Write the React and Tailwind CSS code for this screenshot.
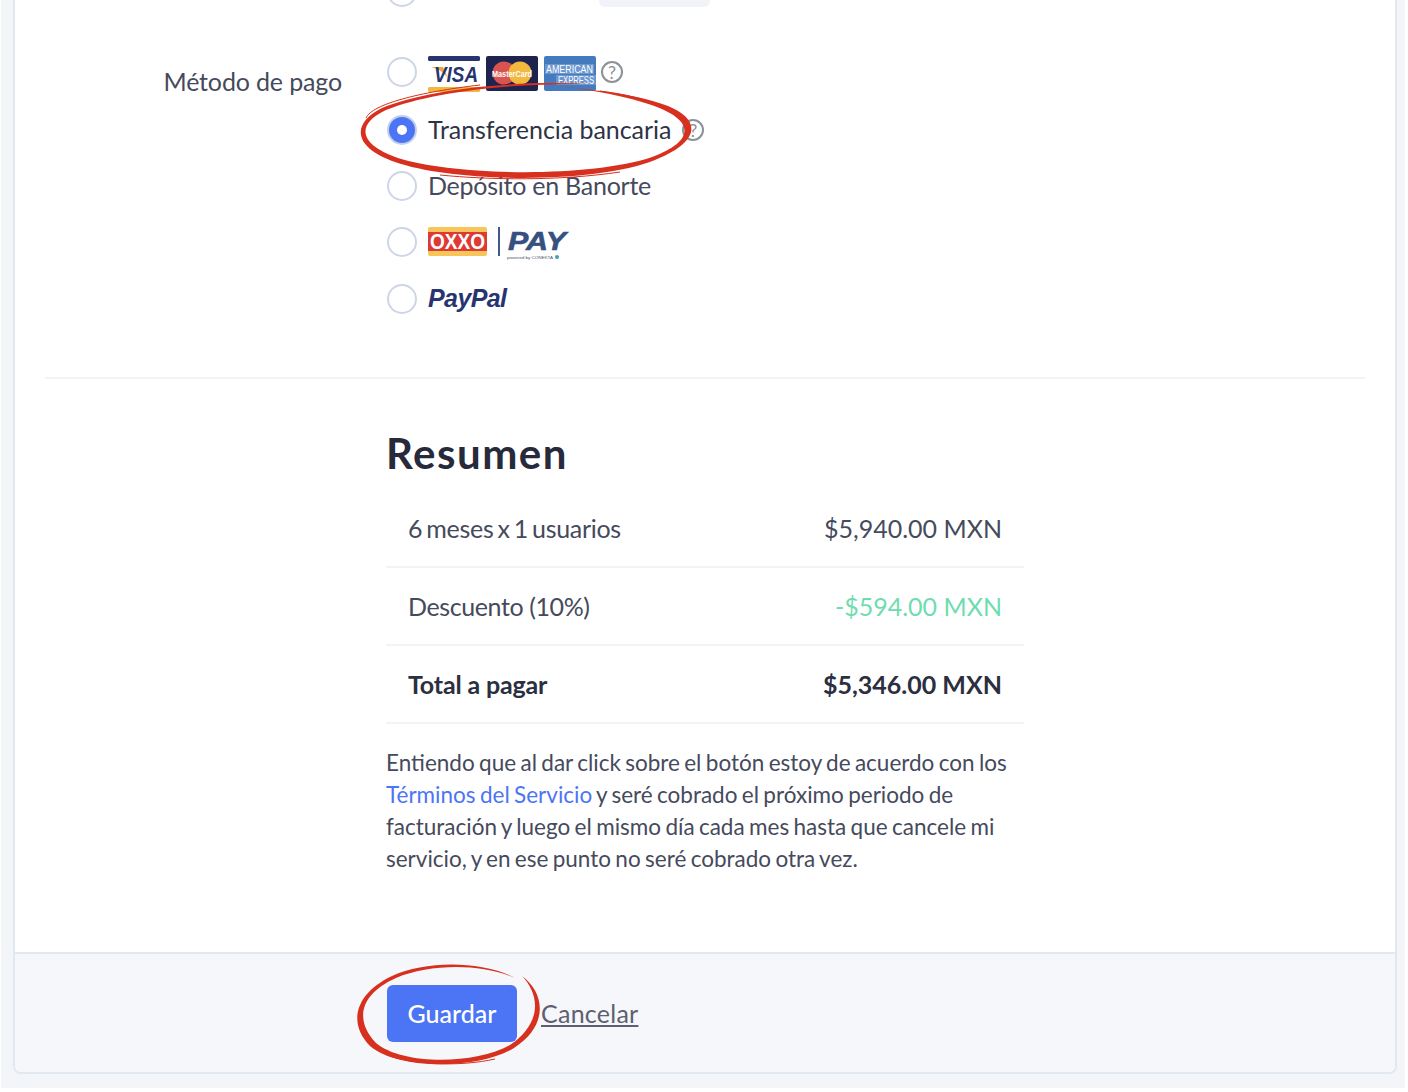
import React from 'react'

function Radio({ checked }) {
  if (checked) {
    return (
      <span className="flex h-[30px] w-[30px] shrink-0 items-center justify-center rounded-full border-2 border-[#c3d0ea] bg-[#4c75f5]">
        <span className="h-[10px] w-[10px] rounded-full bg-white" />
      </span>
    )
  }
  return <span className="h-[30px] w-[30px] shrink-0 rounded-full border-2 border-[#cdd5e6] bg-white" />
}

function Help() {
  return (
    <span className="flex h-[22px] w-[22px] items-center justify-center rounded-full border-2 border-[#8c9099] text-[18px] leading-none text-[#8c9099]">
      ?
    </span>
  )
}

function CardLogos() {
  return (
    <svg width="168" height="36" viewBox="0 0 168 36" className="mt-[3px] shrink-0">
      <rect width="52" height="5" rx="1.5" fill="#27346f" />
      <rect y="31" width="52" height="5" rx="1.5" fill="#f0b83c" />
      <path d="M3 11 L15 11 L20 22 C16 16 10 13 3 11Z" fill="#eda83a" />
      <text x="6" y="26" textLength="44" lengthAdjust="spacingAndGlyphs" fontFamily="Liberation Sans" fontWeight="700" fontStyle="italic" fontSize="22" fill="#27346f">VISA</text>
      <rect x="58" width="52" height="35" rx="2" fill="#1d2450" />
      <circle cx="76" cy="17" r="11.5" fill="#d9534f" />
      <circle cx="92" cy="17" r="11.5" fill="#f2b83f" />
      <text x="64" y="20.5" textLength="40" lengthAdjust="spacingAndGlyphs" fontFamily="Liberation Sans" fontWeight="700" fontSize="9" fill="#fff">MasterCard</text>
      <rect x="116" width="52" height="35" rx="2" fill="#447bbf" />
      <rect x="117" y="8" width="49" height="10" fill="#6b97cf" />
      <rect x="128" y="19" width="40" height="10" fill="#6b97cf" />
      <text x="118" y="16.5" textLength="47" lengthAdjust="spacingAndGlyphs" fontFamily="Liberation Sans" fontSize="10" fill="#fff">AMERICAN</text>
      <text x="130" y="27.5" textLength="36" lengthAdjust="spacingAndGlyphs" fontFamily="Liberation Sans" fontSize="10" fill="#fff">EXPRESS</text>
    </svg>
  )
}

function OxxoPay() {
  return (
    <svg width="142" height="36" viewBox="0 0 142 36" className="mt-[6px] shrink-0">
      <rect width="59" height="29" rx="2" fill="#f6c65b" />
      <rect y="5" width="59" height="19" fill="#dd3a34" />
      <text x="2" y="22" textLength="55" lengthAdjust="spacingAndGlyphs" fontFamily="Liberation Sans" fontWeight="700" fontSize="22" fill="#fff">OXXO</text>
      <rect x="70" width="2" height="29" fill="#3d5a8a" />
      <text x="80" y="23" textLength="58" lengthAdjust="spacingAndGlyphs" fontFamily="Liberation Sans" fontWeight="700" fontStyle="italic" fontSize="26" fill="#36517f" stroke="#36517f" strokeWidth="0.6">PAY</text>
      <text x="79" y="31.5" textLength="46" lengthAdjust="spacingAndGlyphs" fontFamily="Liberation Sans" fontSize="4" fill="#4a5568">powered by CONEKTA</text>
      <circle cx="129" cy="30" r="2" fill="#3f9fb3" />
    </svg>
  )
}

function Sketches() {
  return (
    <svg width="1408" height="1092" viewBox="0 0 1408 1092" className="pointer-events-none absolute left-0 top-0">
      {/* payment method ring */}
      <path d="M590 84 C510 80 425 90 382 108 C350 124 354 148 395 162 C455 183 595 184 655 160 C700 142 702 120 668 106 C630 92 590 90 540 84 C590 89 635 97 664 110 C694 124 692 142 652 157 C590 178 455 176 398 158 C358 144 356 124 386 110 C430 92 510 83 590 84Z" fill="#d7301f" />
      <path d="M440 175 C490 180 560 181 620 172" fill="none" stroke="#d7301f" strokeWidth="1" />
      <path d="M366 118 C372 104 420 92 480 85" fill="none" stroke="#d7301f" strokeWidth="1" />
      <path d="M600 91 C640 96 668 106 684 118" fill="none" stroke="#d7301f" strokeWidth="1" />
      {/* save button ring */}
      <path d="M515 978 C480 960 425 961 392 976 C354 994 348 1024 370 1046 C398 1070 478 1070 514 1048 C548 1026 546 994 522 976 C541 996 541 1024 510 1045 C474 1065 402 1065 376 1043 C354 1020 360 994 396 978 C430 964 480 963 515 978Z" fill="#d7301f" />
      <path d="M385 1054 C410 1065 460 1067 495 1059" fill="none" stroke="#d7301f" strokeWidth="1" />
    </svg>
  )
}

function SummaryRow({ label, value, bold, valueClass, labelClass }) {
  return (
    <div className={`flex h-[78px] items-center justify-between border-b-2 border-[#f2f3f6] px-[22px] pt-[1px] text-[25px] ${bold ? 'font-bold text-[#2b2f3f]' : 'text-[#454a5c]'}`}>
      <span className={labelClass}>{label}</span>
      <span className={valueClass}>{value}</span>
    </div>
  )
}

export default function App() {
  return (
    <div className="relative h-[1092px] w-[1408px] overflow-hidden bg-white font-['Lato',sans-serif]">
      <div className="ml-px flex h-[1088px] w-[1404px] flex-col bg-[#f3f5f9] pb-[14px] pl-3 pr-[8px]">
        <div className="flex flex-1 flex-col overflow-hidden rounded-b-lg border-x-2 border-b-2 border-[#e2e8f0] bg-white">
          {/* payment */}
          <div className="flex flex-1 flex-col overflow-hidden">
            <div className="-mt-[23px] flex">
              <div className="w-[327px] pt-[89px] text-right text-[25px] leading-[30px] tracking-[-0.15px] text-[#454a5c]">Método de pago</div>
              <div className="ml-[45px] flex flex-col">
                <div className="flex h-[30px] items-center">
                  <Radio />
                  <span className="ml-[182px] h-[30px] w-[111px] rounded-md bg-[#f1f3f9]" />
                </div>
                <div className="mt-[50px] flex h-[30px] items-center gap-[11px]">
                  <Radio />
                  <CardLogos />
                  <span className="-ml-[6px]"><Help /></span>
                </div>
                <div className="mt-[28px] flex h-[30px] items-center gap-[11px] text-[25px] text-[#2e3346]">
                  <Radio checked />
                  <span className="tracking-[-0.05px]">Transferencia bancaria</span>
                  <Help />
                </div>
                <div className="mt-[26px] flex h-[30px] items-center gap-[11px] text-[25px] text-[#454a5c]">
                  <Radio />
                  <span className="tracking-[-0.25px]">Depósito en Banorte</span>
                </div>
                <div className="mt-[26px] flex h-[30px] items-center gap-[11px]">
                  <Radio />
                  <OxxoPay />
                </div>
                <div className="mt-[27px] flex h-[30px] items-center gap-[11px]">
                  <Radio />
                  <span className="font-['Liberation_Sans',sans-serif] text-[25px] font-bold italic tracking-[-0.6px] text-[#27346f]">PayPal</span>
                </div>
              </div>
            </div>

            <div className="mx-[30px] mt-[63px] border-t-2 border-[#f2f3f6]" />

            {/* resumen */}
            <div className="ml-[371px] w-[638px]">
              <h2 className="mt-[46px] text-[42px] font-bold leading-[56px] tracking-[1.5px] text-[#262a3b]">Resumen</h2>
              <div className="mt-[9px]">
                <SummaryRow label="6 meses x 1 usuarios" value="$5,940.00 MXN" labelClass="tracking-[-0.3px] [word-spacing:-2px]" />
                <SummaryRow label="Descuento (10%)" value="-$594.00 MXN" valueClass="text-[#6fdcb0]" labelClass="tracking-[-0.4px]" />
                <SummaryRow label="Total a pagar" value="$5,346.00 MXN" bold labelClass="tracking-[-0.15px]" />
              </div>
              <p className="mt-[23px] text-[22.5px] leading-[32px] text-[#454a5c] [word-spacing:-1.4px]">
                Entiendo que al dar click sobre el botón estoy de acuerdo con los{' '}
                <a className="text-[#4c75f5]">Términos del Servicio</a> y seré cobrado el próximo periodo de facturación y luego el mismo día cada mes hasta que cancele mi servicio, y en ese punto no seré cobrado otra vez.
              </p>
            </div>
          </div>

          {/* footer */}
          <div className="flex h-[120px] shrink-0 items-center border-t-2 border-[#e2e8f0] bg-[#f6f7fa] pl-[372px]">
            <button className="h-[57px] w-[130px] rounded-md bg-[#4c75f5] pt-[2px] text-[25px] font-medium text-white">Guardar</button>
            <a className="ml-6 pt-[1px] text-[25px] tracking-[0.25px] text-[#5c6070] underline">Cancelar</a>
          </div>
        </div>
      </div>
      <Sketches />
    </div>
  )
}
